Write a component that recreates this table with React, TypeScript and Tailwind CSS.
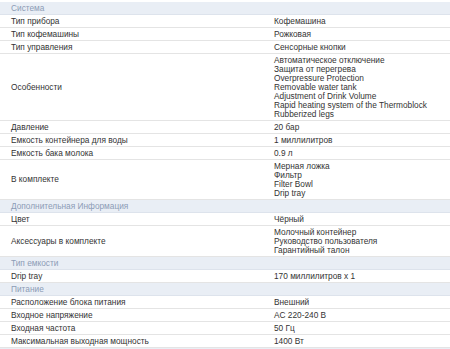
type Row = { label: string; value: string[] }
type Section = { title: string; rows: Row[] }

const SECTIONS: Section[] = [
  {
    title: 'Система',
    rows: [
      { label: 'Тип прибора', value: ['Кофемашина'] },
      { label: 'Тип кофемашины', value: ['Рожковая'] },
      { label: 'Тип управления', value: ['Сенсорные кнопки'] },
      {
        label: 'Особенности',
        value: [
          'Автоматическое отключение',
          'Защита от перегрева',
          'Overpressure Protection',
          'Removable water tank',
          'Adjustment of Drink Volume',
          'Rapid heating system of the Thermoblock',
          'Rubberized legs',
        ],
      },
      { label: 'Давление', value: ['20 бар'] },
      { label: 'Емкость контейнера для воды', value: ['1 миллилитров'] },
      { label: 'Емкость бака молока', value: ['0.9 л'] },
      { label: 'В комплекте', value: ['Мерная ложка', 'Фильтр', 'Filter Bowl', 'Drip tray'] },
    ],
  },
  {
    title: 'Дополнительная Информация',
    rows: [
      { label: 'Цвет', value: ['Чёрный'] },
      {
        label: 'Аксессуары в комплекте',
        value: ['Молочный контейнер', 'Руководство пользователя', 'Гарантийный талон'],
      },
    ],
  },
  {
    title: 'Тип емкости',
    rows: [{ label: 'Drip tray', value: ['170 миллилитров x 1'] }],
  },
  {
    title: 'Питание',
    rows: [
      { label: 'Расположение блока питания', value: ['Внешний'] },
      { label: 'Входное напряжение', value: ['AC 220-240 В'] },
      { label: 'Входная частота', value: ['50 Гц'] },
      { label: 'Максимальная выходная мощность', value: ['1400 Вт'] },
    ],
  },
]

export default function App() {
  return (
    <div className="w-[450px] h-[349px] overflow-hidden bg-white pt-[2px] font-['Liberation_Sans',Arial,sans-serif] text-[8.3px] leading-[9px] text-[#333]">
      {SECTIONS.map((s) => (
        <div key={s.title}>
          <div className="bg-[#e9eef5] border-b border-[#dde3ec] pl-[11px] py-[1.5px] text-[#8c9cb5]">
            <div className="h-[9px]">{s.title}</div>
          </div>
          {s.rows.map((r) => (
            <div key={r.label} className="grid grid-cols-[263px_1fr] border-b border-[#e4e4e4] py-[1.5px]">
              <div className="pl-[11px] flex items-center">{r.label}</div>
              <div className="pl-[11px] flex flex-col">
                {r.value.map((v) => (
                  <span key={v} className="h-[9px] whitespace-nowrap">{v}</span>
                ))}
              </div>
            </div>
          ))}
        </div>
      ))}
      {/* next section header, cut off at the bottom */}
      <div className="bg-[#e9eef5] h-[13px]" />
    </div>
  )
}
